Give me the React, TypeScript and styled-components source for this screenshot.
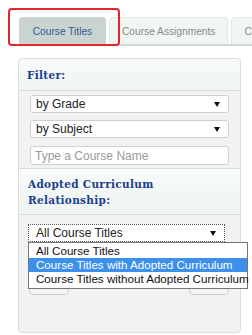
import React from "react";
import styled, { createGlobalStyle } from "styled-components";

const GlobalStyle = createGlobalStyle`
  html, body {
    margin: 0;
    padding: 0;
    background: #ffffff;
    font-family: "Liberation Sans", Arial, sans-serif;
  }
`;

const Page = styled.div`
  position: relative;
  width: 252px;
  height: 335px;
  overflow: hidden;
`;

const TabBar = styled.div`
  display: flex;
  gap: 3px;
  margin: 17px 0 0 19px;
  border-bottom: 2px solid #d3dbd9;
  height: 27px;
`;

const Tab = styled.div<{ $active?: boolean }>`
  flex: none;
  height: 27px;
  min-width: ${(p) => (p.$active ? "87px" : "0")};
  padding: 0 12px;
  display: flex;
  align-items: center;
  justify-content: center;
  font-size: 10.2px;
  border-radius: 4px 4px 0 0;
  border: 1px solid ${(p) => (p.$active ? "#c9d3d0" : "#e2ebe8")};
  border-bottom: none;
  box-sizing: border-box;
  background: ${(p) => (p.$active ? "#c9d3d0" : "#eff6f4")};
  color: ${(p) => (p.$active ? "#3a5797" : "#8a8a8a")};
  white-space: nowrap;
`;

const Highlight = styled.div`
  position: absolute;
  left: 8px;
  top: 8px;
  width: 112px;
  height: 38px;
  box-sizing: border-box;
  border: 2px solid #e3262a;
  border-radius: 4px;
  pointer-events: none;
`;

const Panel = styled.div`
  margin: 12px 0 0 18px;
  width: 223px;
  height: 275px;
  box-sizing: border-box;
  border: 1px solid #dcdcdc;
  border-radius: 4px;
  background: #f2f2f2;
  overflow: visible;
`;

const SectionHead = styled.div<{ $tall?: boolean }>`
  padding: ${(p) => (p.$tall ? "7px 9px 6px" : "8px 8px 7px")};
  background: linear-gradient(#f8fbfa, #edf4f2);
  border-bottom: 1px solid #d6dcda;
  border-radius: ${(p) => (p.$tall ? "0" : "4px 4px 0 0")};
  font-family: "DejaVu Serif", "Liberation Serif", serif;
  font-weight: bold;
  font-size: 10.5px;
  letter-spacing: 0.3px;
  line-height: 16px;
  color: #1c3d8e;
`;

const SectionBody = styled.div`
  display: flex;
  flex-direction: column;
  gap: 7px;
  padding: 4px 11px 3px;
  border-bottom: 1px solid #d6dcda;
`;

const SelectBox = styled.div<{ $focus?: boolean }>`
  position: relative;
  height: 18px;
  box-sizing: border-box;
  display: flex;
  align-items: center;
  justify-content: space-between;
  padding: 0 8px 0 ${(p) => (p.$focus ? "7px" : "5px")};
  background: #ffffff;
  border: 1px ${(p) => (p.$focus ? "dotted #555" : "solid #cfcfcf")};
  border-radius: ${(p) => (p.$focus ? "0" : "3px")};
  font-size: 12px;
  color: #222;
`;

const Arrow = styled.span`
  width: 0;
  height: 0;
  border-left: 3px solid transparent;
  border-right: 3px solid transparent;
  border-top: 5px solid #111;
`;

const TextInput = styled.input`
  height: 19px;
  margin-top: 1px;
  box-sizing: border-box;
  padding: 0 4px;
  border: 1px solid #cfcfcf;
  border-radius: 3px;
  font-family: "Liberation Sans", Arial, sans-serif;
  font-size: 12px;
  outline: none;
  &::placeholder {
    color: #9a9a9a;
  }
`;

const BottomBody = styled.div`
  position: relative;
  padding: 9px 15px 0 9px;
`;

const ButtonRow = styled.div`
  display: flex;
  justify-content: space-between;
  padding: 29px 0 0 1px;
  margin-right: -4px;
`;

const GhostButton = styled.div`
  width: 40px;
  height: 24px;
  box-sizing: border-box;
  border: 1px solid #d2d2d2;
  border-radius: 4px;
  background: #f4f4f4;
`;

const DropList = styled.ul`
  position: absolute;
  left: 9px;
  top: 27px;
  width: 220px;
  margin: 0;
  padding: 1px 0 2px;
  list-style: none;
  background: #ffffff;
  border: 1px solid #767676;
  box-sizing: border-box;
  z-index: 2;
`;

const DropItem = styled.li<{ $selected?: boolean }>`
  height: 14px;
  line-height: 14px;
  padding-left: 7px;
  font-size: 11.6px;
  white-space: nowrap;
  background: ${(p) => (p.$selected ? "#3c8fea" : "transparent")};
  color: ${(p) => (p.$selected ? "#ffffff" : "#111")};
`;

const options = [
  "All Course Titles",
  "Course Titles with Adopted Curriculum",
  "Course Titles without Adopted Curriculum",
];

export default function App() {
  return (
    <Page>
      <GlobalStyle />
      <TabBar>
        <Tab $active>Course Titles</Tab>
        <Tab>Course Assignments</Tab>
        <Tab>Course</Tab>
      </TabBar>
      <Highlight />
      <Panel>
        <SectionHead>Filter:</SectionHead>
        <SectionBody>
          <SelectBox>
            by Grade
            <Arrow />
          </SelectBox>
          <SelectBox>
            by Subject
            <Arrow />
          </SelectBox>
          <TextInput placeholder="Type a Course Name" />
        </SectionBody>
        <SectionHead $tall>
          Adopted Curriculum
          <br />
          Relationship:
        </SectionHead>
        <BottomBody>
          <SelectBox $focus>
            All Course Titles
            <Arrow />
          </SelectBox>
          <ButtonRow>
            <GhostButton />
            <GhostButton />
          </ButtonRow>
          <DropList>
            {options.map((o, i) => (
              <DropItem key={o} $selected={i === 1}>
                {o}
              </DropItem>
            ))}
          </DropList>
        </BottomBody>
      </Panel>
    </Page>
  );
}
